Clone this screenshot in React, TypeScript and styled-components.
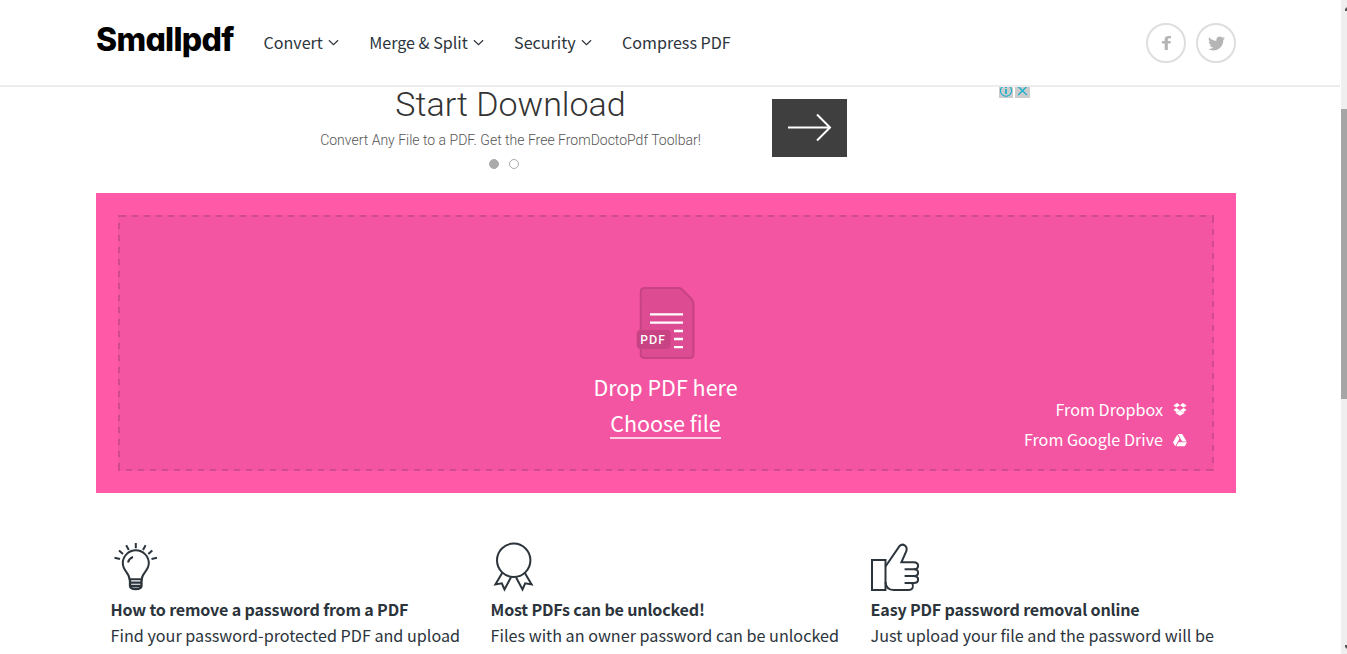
import React from "react";
import styled, { createGlobalStyle } from "styled-components";
import { FaGoogleDrive, FaTwitter } from "react-icons/fa";

const INK = "#2c343c";
const DASH = "#cf4b8d";

const GlobalStyle = createGlobalStyle`
  * {
    box-sizing: border-box;
  }
  body {
    margin: 0;
    overflow: hidden;
    background: #fff;
    color: ${INK};
    font-family: "Noto Sans CJK SC", "Open Sans", sans-serif;
  }
`;

const Root = styled.div`
  display: grid;
  grid-template-columns: 1340px 6px;
  column-gap: 1px;
  height: 654px;
  overflow: hidden;
`;

const Page = styled.div`
  height: 654px;
  overflow: hidden;
`;

const Header = styled.header`
  display: flex;
  align-items: flex-start;
  height: 87px;
  padding: 0 104px 0 96px;
  border-bottom: 2px solid #ededed;
`;

const Logo = styled.a`
  width: 167.5px;
  margin-top: 19.5px;
  font: 800 32px/40px Inter, sans-serif;
  font-feature-settings: "cv11";
  letter-spacing: -0.7px;
  color: #000;
`;

const Nav = styled.nav`
  display: flex;
  gap: 30.3px;
  margin-top: 30px;
`;

const NavItem = styled.a`
  display: flex;
  align-items: center;
  gap: 5px;
  font-size: 16.1px;
  line-height: 24px;
  white-space: nowrap;
`;

const Social = styled.div`
  display: flex;
  gap: 10px;
  margin: 23px 0 0 auto;
`;

const SocialButton = styled.a`
  display: flex;
  align-items: center;
  justify-content: center;
  width: 40px;
  height: 40px;
  border: 2px solid #dedede;
  border-radius: 50%;
  color: #b5b5b5;
  font-size: 17px;
`;

const Ad = styled.section`
  display: flex;
  align-items: flex-start;
  width: 728px;
  height: 106px;
  margin-left: 302px;
  font-family: Roboto, sans-serif;
`;

const AdCopy = styled.div`
  display: flex;
  flex-direction: column;
  align-items: center;
  width: 417px;
  white-space: nowrap;
`;

const AdTitle = styled.div`
  font-size: 34px;
  font-weight: 300;
  line-height: 35px;
  color: #333;
`;

const AdText = styled.div`
  margin-top: 8px;
  font-size: 14px;
  font-weight: 300;
  line-height: 20px;
  color: #555;
`;

const Dots = styled.div`
  display: flex;
  gap: 10px;
  margin: 9px 13px 0 0;
`;

const Dot = styled.i<{ active?: boolean }>`
  width: 10px;
  height: 10px;
  border: 1px solid #aaa;
  border-radius: 50%;
  background: ${({ active }) => (active ? "#aaa" : "#fff")};
`;

const AdArrow = styled.a`
  display: flex;
  width: 75px;
  height: 58px;
  margin: 12px 0 0 53px;
  background: #3f3f3f;
`;

const AdChoices = styled.div`
  display: flex;
  gap: 2px;
  height: 11px;
  margin-left: auto;
`;

const DropZone = styled.section`
  width: 1140px;
  height: 300px;
  margin-left: 96px;
  padding: 22px;
  background: #ff59a8;
`;

/* dashes are 6px on, 6px off, running continuously around the corners */
const DropArea = styled.div`
  display: grid;
  grid-template-columns: 1fr auto 1fr;
  height: 256px;
  padding: 2px;
  background:
    linear-gradient(90deg, ${DASH} 50%, transparent 50%) 2px 0 / 12px 2px repeat-x,
    linear-gradient(90deg, ${DASH} 50%, transparent 50%) 8px 100% / 12px 2px repeat-x,
    linear-gradient(${DASH} 50%, transparent 50%) 0 8px / 2px 12px repeat-y,
    linear-gradient(${DASH} 50%, transparent 50%) 100% 2px / 2px 12px repeat-y,
    #f455a2;
  color: #fff;
`;

const Picker = styled.div`
  display: flex;
  flex-direction: column;
  align-items: center;
  grid-column: 2;
  padding-top: 70px;
  margin-left: -1px;
  font-size: 21.5px;
  line-height: 32px;
`;

const DropText = styled.div`
  margin-top: 12px;
`;

const ChooseFile = styled.a`
  height: 32px;
  margin-top: 4px;
  line-height: 32px;
  border-bottom: 2px solid #fcd0e4;
`;

const Sources = styled.div`
  display: flex;
  flex-direction: column;
  align-items: flex-end;
  align-self: end;
  padding: 0 25px 15px 0;
`;

const Source = styled.a`
  display: flex;
  align-items: center;
  gap: 10px;
  font-size: 16.15px;
  line-height: 30px;

  svg {
    margin-top: 1px;
  }
`;

const Features = styled.section`
  display: grid;
  grid-template-columns: repeat(3, 380px);
  margin: 48px 0 0 96px;
`;

const Feature = styled.article`
  padding-left: 14.6px;
  white-space: nowrap;
`;

const FeatureTitle = styled.h3`
  margin: 3px 0 0;
  font-size: 16.1px;
  font-weight: 600;
  line-height: 26px;
  letter-spacing: -0.18px;
`;

const FeatureText = styled.p`
  margin: 0;
  font-size: 16.17px;
  line-height: 26px;
`;

const LineIcon = styled.svg`
  display: block;
  width: 52px;
  height: 52px;
  fill: none;
  stroke: ${INK};
  stroke-width: 2;
`;

const Scrollbar = styled.aside`
  display: flex;
  flex-direction: column;
  justify-content: space-between;
  height: 654px;
  background: #efefef;
`;

const Thumb = styled.div`
  height: 290px;
  margin: 93px 0 auto;
  background: #a5a5a5;
`;

const Chevron: React.FC = () => (
  <svg width="11" height="8" viewBox="0 0 11 8" fill="none" stroke={INK} strokeWidth="1.2">
    <path d="M.9 2.2 5.5 6.6 10.1 2.2" />
  </svg>
);

const FacebookIcon: React.FC = () => (
  <svg width="9" height="14" viewBox="95 0 864 1664" preserveAspectRatio="none" fill="currentColor">
    <path d="M959 12v264h-157q-86 0-116 36t-30 108v189h293l-39 296h-254v759h-306v-759h-255v-296h255v-218q0-186 104-288.5t277-102.5q147 0 228 12z" />
  </svg>
);

const DropboxIcon: React.FC = () => (
  <svg width="14" height="13" viewBox="0 0 14 13" fill="#fff">
    <path d="M4.1 0 7 2.3 3.3 4.6.4 2.5ZM9.9 0 7 2.3 10.7 4.6 13.6 2.5Z" />
    <path d="M3.3 4.9 7 7.2 4.2 9.3.4 6.9ZM10.7 4.9 7 7.2 9.8 9.3 13.6 6.9Z" />
    <path d="M2.7 8.7 4.2 9.6 7 7.5 9.8 9.6 11.3 8.7V10.1L7 12.7 2.7 10.1Z" />
  </svg>
);

const PdfIcon: React.FC = () => (
  <svg width="60" height="72" viewBox="-1 0 60 72">
    <path
      d="M8.7 1H42.7Q44.7 1 46.7 3L55.5 12Q57.5 14 57.5 17V67Q57.5 71 53.5 71H8.7Q4.7 71 4.7 67V5Q4.7 1 8.7 1Z"
      fill="#dd4c93"
      stroke="#c74384"
      strokeWidth="2"
    />
    <rect x=".7" y="43" width="34" height="19" rx="4" fill="#c74384" />
    <path d="M14 27.4H47M14 35.7H47M38 44H47M38 52H47M38 60.2H47" stroke="#fff" strokeWidth="2.3" />
    <text x="3.9" y="56.7" fill="#fff" fontSize="12.3" fontWeight="500" letterSpacing=".8">
      PDF
    </text>
  </svg>
);

const Bulb = () => (
  <LineIcon viewBox="0 0 52 52">
    <path d="M18.5 38.3C18.5 32 11.8 30 11.8 22.3A13 13 0 0 1 37.8 22.3C37.8 30 30.8 32 30.8 38.3Z" />
    <path d="M17 21.5Q18 17.5 22 16M24.8 2V7.2M15.2 4.2 17.8 9M34.6 4.2 32 9M8 9.5 12 13M41.3 9.5 37.3 13M3.5 16.7 9 18M46 16.7 40.5 18" />
    <path d="M19 38V45Q19 48 24.8 48Q30.5 48 30.5 45V38M19 41.7H30.5M19 45H30.5" strokeWidth="2.3" />
  </LineIcon>
);

const Rosette = () => (
  <LineIcon viewBox="0 0 52 52">
    <circle cx="22.7" cy="19.3" r="16.7" />
    <path d="M11.3 31.7 4.4 43.4 10.8 42.3 13.5 48.5 20 36.2M33.7 31.7 40.6 43.4 34.2 42.3 31.5 48.5 25 36.2" />
  </LineIcon>
);

const ThumbUp = () => (
  <LineIcon viewBox="0.4 0 52 52">
    <path d="M1.4 19H14.9V49H1.4Z" />
    <path d="M14.9 25.5 29 5C32 2 37.2 4.5 35.8 10L30.8 21.3H43C49 21.3 49 28.3 43 28.3H34M43 28.3C49 28.3 49 35 43 35H34M43 35C49 35 49 42 43 42H34M41.5 42C43.5 45.5 42 49 38 49H23Q15.5 49 14.9 41" />
  </LineIcon>
);

const navItems = [
  { label: "Convert", menu: true },
  { label: "Merge & Split", menu: true },
  { label: "Security", menu: true },
  { label: "Compress PDF", menu: false },
];

const features = [
  {
    icon: <Bulb />,
    title: "How to remove a password from a PDF",
    text: "Find your password-protected PDF and upload",
  },
  {
    icon: <Rosette />,
    title: "Most PDFs can be unlocked!",
    text: "Files with an owner password can be unlocked",
  },
  {
    icon: <ThumbUp />,
    title: "Easy PDF password removal online",
    text: "Just upload your file and the password will be",
  },
];

const App: React.FC = () => (
  <Root>
    <GlobalStyle />
    <Page>
      <Header>
        <Logo>Smallpdf</Logo>
        <Nav>
          {navItems.map(({ label, menu }) => (
            <NavItem key={label}>
              {label}
              {menu && <Chevron />}
            </NavItem>
          ))}
        </Nav>
        <Social>
          <SocialButton>
            <FacebookIcon />
          </SocialButton>
          <SocialButton>
            <FaTwitter />
          </SocialButton>
        </Social>
      </Header>
      <Ad>
        <AdCopy>
          <AdTitle>Start Download</AdTitle>
          <AdText>Convert Any File to a PDF. Get the Free FromDoctoPdf Toolbar!</AdText>
          <Dots>
            <Dot active />
            <Dot />
          </Dots>
        </AdCopy>
        <AdArrow>
          <svg width="75" height="58" fill="none" stroke="#fff" strokeWidth="2">
            <path d="M16 28.5H58M45 15.5 58 28.5 45 41.5" />
          </svg>
        </AdArrow>
        <AdChoices>
          <svg width="14" height="11" fill="none" stroke="#1fb1cc" strokeWidth="1.2">
            <path d="M0 0H14V11H0Z" fill="#ccc" stroke="none" />
            <circle cx="7" cy="3.7" r="5.6" />
            <path d="M7 2V7M7 0V1" strokeWidth="1.8" />
          </svg>
          <svg width="15" height="11" fill="none" stroke="#1fb1cc" strokeWidth="1.4">
            <path d="M0 0H15V11H0Z" fill="#ccc" stroke="none" />
            <path d="M3.2 -.5 11.8 8M11.8 -.5 3.2 8" />
          </svg>
        </AdChoices>
      </Ad>
      <DropZone>
        <DropArea>
          <Picker>
            <PdfIcon />
            <DropText>Drop PDF here</DropText>
            <ChooseFile>Choose file</ChooseFile>
          </Picker>
          <Sources>
            <Source>
              From Dropbox <DropboxIcon />
            </Source>
            <Source>
              From Google Drive <FaGoogleDrive size={14} />
            </Source>
          </Sources>
        </DropArea>
      </DropZone>
      <Features>
        {features.map(({ icon, title, text }) => (
          <Feature key={title}>
            {icon}
            <FeatureTitle>{title}</FeatureTitle>
            <FeatureText>{text}</FeatureText>
          </Feature>
        ))}
      </Features>
    </Page>
    <Scrollbar>
      <svg width="6" height="16">
        <path d="M4 11V9L6 7V11Z" fill="#555" />
      </svg>
      <Thumb />
      <svg width="6" height="16">
        <path d="M4 7V9L6 11V7Z" fill="#555" />
      </svg>
    </Scrollbar>
  </Root>
);

export default App;
